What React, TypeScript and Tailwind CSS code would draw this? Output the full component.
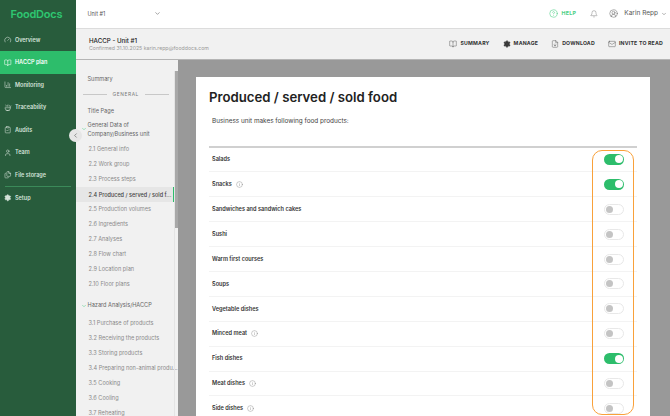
import {
  BarChart3,
  Bell,
  BookOpen,
  ChevronDown,
  ChevronLeft,
  CircleHelp,
  CircleUserRound,
  ClipboardCheck,
  FileDown,
  Files,
  Gauge,
  Info,
  Mail,
  Settings,
  Soup,
  User,
} from "lucide-react";

const navItems = [
  { label: "Overview", icon: Gauge },
  { label: "HACCP plan", icon: BookOpen, active: true },
  { label: "Monitoring", icon: BarChart3 },
  { label: "Traceability", icon: Soup },
  { label: "Audits", icon: ClipboardCheck },
  { label: "Team", icon: User },
  { label: "File storage", icon: Files },
];

const foods = [
  { name: "Salads", on: true },
  { name: "Snacks", on: true, info: true },
  { name: "Sandwiches and sandwich cakes" },
  { name: "Sushi" },
  { name: "Warm first courses" },
  { name: "Soups" },
  { name: "Vegetable dishes" },
  { name: "Minced meat", info: true },
  { name: "Fish dishes", on: true },
  { name: "Meat dishes", info: true },
  { name: "Side dishes", info: true },
];

const general = [
  "2.1 General info",
  "2.2 Work group",
  "2.3 Process steps",
  "2.4 Produced / served / sold f...",
  "2.5 Production volumes",
  "2.6 Ingredients",
  "2.7 Analyses",
  "2.8 Flow chart",
  "2.9 Location plan",
  "2.10 Floor plans",
];

const hazard = [
  "3.1 Purchase of products",
  "3.2 Receiving the products",
  "3.3 Storing products",
  "3.4 Preparing non-animal produ...",
  "3.5 Cooking",
  "3.6 Cooling",
  "3.7 Reheating",
];

function Toggle({ on }: { on?: boolean }) {
  return on ? (
    <div className="flex h-[11px] w-[20px] items-center justify-end rounded-full bg-[#2dbd6b] px-[1.5px]">
      <div className="h-[8px] w-[8px] rounded-full bg-white" />
    </div>
  ) : (
    <div className="flex h-[11px] w-[20px] items-center rounded-full border border-[#e8e8e8] bg-white px-[1px]">
      <div className="h-[7px] w-[7px] rounded-full bg-[#c4c4c4]" />
    </div>
  );
}

function HeaderAction({ icon: Icon, label, solid }: { icon: typeof Mail; label: string; solid?: boolean }) {
  return (
    <div className="flex items-center gap-[3px]">
      <Icon size={8} strokeWidth={solid ? 2 : 1.25} fill={solid ? "#333" : "none"} className="text-[#444]" />
      <span className="text-[5.2px] font-bold tracking-[0.2px] text-[#333]">{label}</span>
    </div>
  );
}

export default function App() {
  return (
    <div className="flex h-[416px] w-[670px] overflow-hidden bg-[#999] font-['Inter',sans-serif]">
      <aside className="relative z-10 flex w-[75.5px] shrink-0 flex-col bg-[#285c3c]">
        <div className="flex h-[28.5px] items-center pl-[10.5px] text-[11px] font-semibold tracking-[-0.2px] text-[#2ec771]">
          FoodDocs
        </div>
        <nav className="flex flex-col">
          {navItems.map((item) => (
            <div
              key={item.label}
              className={`flex h-[22.5px] items-center gap-[3.5px] pl-[4px] text-[5.5px] font-semibold ${
                item.active ? "bg-[#2dbd6b] text-white" : "text-[#d4e2d9]"
              }`}
            >
              <item.icon size={7.5} strokeWidth={1.75} />
              {item.label}
            </div>
          ))}
        </nav>
        <div className="mx-[5px] h-px bg-[#3b8a59]" />
        <div className="flex h-[22px] items-center gap-[3.5px] pl-[4px] text-[5.5px] font-semibold text-[#d4e2d9]">
          <Settings size={7.5} strokeWidth={2} fill="#d4e2d9" />
          Setup
        </div>
        <button className="absolute -right-[6.5px] top-[128.5px] flex h-[13px] w-[13px] items-center justify-center rounded-full bg-[#e6e6e6] text-[#555]">
          <ChevronLeft size={7} />
        </button>
      </aside>

      <div className="flex min-w-0 flex-1 flex-col">
        <header className="flex h-[28.5px] shrink-0 items-center border-b border-[#dcdcdc] bg-white pl-[12px] pr-[3px]">
          <span className="text-[5.5px] text-[#555]">Unit #1</span>
          <ChevronDown size={7} className="ml-[49px] text-[#666]" />
          <div className="ml-auto flex items-center">
            <CircleHelp size={9} strokeWidth={1.5} className="text-[#4ccf85]" />
            <span className="ml-[4px] text-[5.3px] font-bold tracking-[0.3px] text-[#4ccf85]">HELP</span>
            <Bell size={8} strokeWidth={1.25} className="ml-[14px] text-[#666]" />
            <CircleUserRound size={9} strokeWidth={1.25} className="ml-[11px] text-[#555]" />
            <span className="ml-[6px] text-[6.5px] text-[#555]">Karin Repp</span>
            <ChevronDown size={6} className="ml-[3px] text-[#666]" />
          </div>
        </header>

        <div className="flex h-[31px] shrink-0 items-center justify-between border-b border-[#b5b5b5] bg-[#f1f1f1] pl-[13.5px] pr-[7px]">
          <div>
            <div className="text-[6.2px] font-medium leading-[9px] text-[#222]">HACCP - Unit #1</div>
            <div className="text-[5.2px] leading-[7px] text-[#999]">Confirmed 31.10.2025 karin.repp@fooddocs.com</div>
          </div>
          <div className="flex items-center gap-[13px]">
            <HeaderAction icon={BookOpen} label="SUMMARY" />
            <HeaderAction icon={Settings} label="MANAGE" solid />
            <HeaderAction icon={FileDown} label="DOWNLOAD" />
            <HeaderAction icon={Mail} label="INVITE TO READ" />
          </div>
        </div>

        <div className="flex min-h-0 flex-1">
          <div className="relative w-[102.5px] shrink-0 overflow-hidden bg-[#f1f1f1]">
            <div className="absolute right-[0px] top-[11px] h-[157px] w-[3px] bg-[#a8a8a8]" />
            <div className="absolute right-[3px] top-[11px] h-[350px] w-px bg-[#e4e4e4]" />

            <div className="pt-[15px] text-[5.6px] text-[#666]">
              <div className="pl-[12px] leading-[9px]">Summary</div>
              <div className="mt-[7px] flex items-center gap-[6px] pl-[7px] pr-[9px]">
                <div className="h-px flex-1 bg-[#c8c8c8]" />
                <span className="text-[4.8px] tracking-[0.6px] text-[#777]">GENERAL</span>
                <div className="h-px flex-1 bg-[#c8c8c8]" />
              </div>
              <div className="mt-[9px] pl-[12px] leading-[9px]">Title Page</div>
              <div className="relative mt-[5.5px] pl-[12px] leading-[8.5px]">
                <ChevronDown size={6} className="absolute left-[5px] top-[5px] text-[#4ccf85]" />
                General Data of
                <br />
                Company/Business unit
              </div>
              <div className="mt-[4px] flex flex-col text-[#8a8a8a]">
                {general.map((g) => {
                  const active = g.startsWith("2.4");
                  return (
                    <div
                      key={g}
                      className={`mr-[3px] flex h-[15px] items-center whitespace-nowrap pl-[13px] ${
                        active ? "border-r-2 border-[#2dbd6b] bg-[#e6e6e6] text-[5.5px] font-medium text-[#444]" : ""
                      }`}
                    >
                      {g}
                    </div>
                  );
                })}
              </div>
              <div className="mt-[9px] flex items-center gap-[1px] pl-[5px] leading-[9px]">
                <ChevronDown size={6} className="text-[#4ccf85]" />
                Hazard Analysis/HACCP
              </div>
              <div className="mt-[6px] flex flex-col text-[#8a8a8a]">
                {hazard.map((h) => (
                  <div key={h} className="flex h-[15px] items-center whitespace-nowrap pl-[13px]">
                    {h}
                  </div>
                ))}
              </div>
            </div>
          </div>

          <main className="min-w-0 flex-1 overflow-hidden bg-[#999] pl-[18px] pr-[20px] pt-[17.5px]">
            <div className="relative h-[400px] bg-white px-[13px]">
              <h1 className="pt-[11.5px] text-[13.2px] font-semibold leading-[17px] text-[#222]">
                Produced / served / sold food
              </h1>
              <p className="mt-[11px] pl-[3px] text-[6.4px] leading-[9px] text-[#444]">
                Business unit makes following food products:
              </p>
              <div className="mt-[20px] border-t-2 border-[#d0d0d0]">
                {foods.map((f) => (
                  <div key={f.name} className="flex h-[24.9px] items-center justify-between border-b border-[#f3f3f3] pl-[3px] pr-[13px]">
                    <div className="flex items-center gap-[4px] text-[5.6px] font-semibold text-[#333]">
                      {f.name}
                      {f.info && <Info size={7} strokeWidth={1.25} className="text-[#777]" />}
                    </div>
                    <Toggle on={f.on} />
                  </div>
                ))}
              </div>
              <div className="absolute left-[396px] top-[73px] h-[265px] w-[41.5px] rounded-[10px] border-[1.5px] border-[#f9a13a]" />
            </div>
          </main>
        </div>
      </div>
    </div>
  );
}
